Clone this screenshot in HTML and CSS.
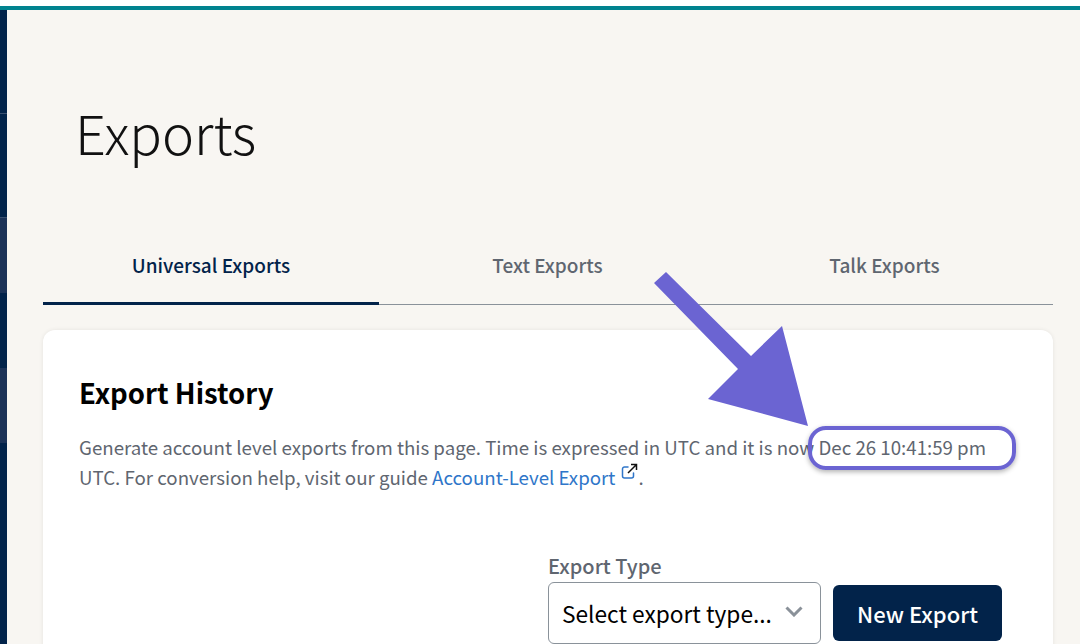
FILE: index.html
```html
<!DOCTYPE html>
<html lang="en">
<head>
<meta charset="utf-8">
<title>Exports</title>
<link rel="stylesheet" href="styles.css">
</head>
<body>
<div class="topbar"></div>
<div class="shell">
  <nav class="rail">
    <div class="seg seg-a"></div>
    <div class="seg seg-b"></div>
    <div class="seg seg-c"></div>
    <div class="seg seg-d"></div>
    <div class="seg seg-e"></div>
    <div class="seg seg-f"></div>
  </nav>
  <main class="main">
    <h1 class="title">Exports</h1>
    <div class="tabs">
      <div class="tab active">Universal Exports</div>
      <div class="tab">Text Exports</div>
      <div class="tab">Talk Exports</div>
    </div>
    <section class="card">
      <h2 class="card-title">Export History</h2>
      <p class="desc">Generate account level exports from this page. Time is expressed in UTC and it is now Dec 26 10:41:59 pm UTC. For conversion help, visit our guide <a class="link">Account-Level Export</a><svg class="ext" width="18" height="18" viewBox="0 0 18 18" fill="none"><path d="M8 4H4.500A2 2 0 0 0 2.500 6v7a2 2 0 0 0 2 2h7a2 2 0 0 0 2-2V10" stroke="#2f76c9" stroke-width="1.500" stroke-linecap="round"/><path d="M8 10 16 2M11 1.500h5.500V7" stroke="#111" stroke-width="1.500"/></svg>.</p>
      <div class="form">
        <div class="field">
          <label class="label">Export Type</label>
          <div class="select">
            <span>Select export type...</span>
            <svg class="chev" width="18" height="11" viewBox="0 0 18 11" fill="none"><path d="M1.500 1.500 9 9l7.500-7.500" stroke="#8a9199" stroke-width="3"/></svg>
          </div>
        </div>
        <button class="btn">New Export</button>
      </div>
    </section>
  </main>
</div>
<svg class="arrow" width="160" height="160" viewBox="0 0 160 160"><polygon points="4,13 16,2 101,86 132,56 158,156 58,129 88,99" fill="#6b64d2"/></svg>
<div class="mark"></div>
</body>
</html>
```
FILE: styles.css
```css
* { box-sizing: border-box; }
html, body { margin: 0; height: 644px; overflow: hidden; }
body { background: #fff; font-family: "Noto Sans CJK JP", "Noto Sans", sans-serif; position: relative; }
.topbar { height: 10px; border-top: 6px solid #fff; background: #00838f; }
.shell { display: flex; height: 634px; overflow: hidden; }
.rail { width: 7px; flex: none; display: flex; flex-direction: column; background: #02234a; }
.seg { flex: none; }
.seg-a { height: 104px; border-bottom: 1px solid #3a5070; }
.seg-b { height: 104px; border-bottom: 1px solid #3a5070; }
.seg-c { height: 75px; background: #1c3358; }
.seg-d { height: 75px; }
.seg-e { height: 75px; background: #1c3358; }
.seg-f { flex: 1; }
.main { flex: 1; background: #f8f6f2; padding: 0 27px 0 36px; min-width: 0; }
.title { margin: 0; padding: 85px 0 0 32px; height: 225px; font-size: 54px; line-height: 74px; font-weight: 200; color: #111; }
.tabs { display: flex; height: 70px; border-bottom: 1px solid #8a929a; }
.tab { flex: 1; text-align: center; font-size: 19px; line-height: 30px; padding-top: 15px; font-weight: 500; color: #5f6670; }
.tab.active { color: #02234a; border-bottom: 3px solid #02234a; margin-bottom: -1px; flex: 336px 0 0; }
.card { margin-top: 25px; background: #fff; border-radius: 12px 12px 0 0; height: 400px; padding: 42px 36px 0; box-shadow: 0 0 4px rgba(0,0,0,.08); }
.card-title { margin: 0; font-size: 27.500px; line-height: 40px; font-weight: 700; color: #000; }
.desc { margin: 20px 0 0; font-size: 18.700px; line-height: 30px; color: #5f6670; width: 930px; }
.link { color: #2f76c9; }
.ext { margin-left: 5px; vertical-align: 4px; }
.form { display: flex; align-items: flex-end; gap: 12px; margin: 58px 0 0 469px; }
.field { display: flex; flex-direction: column; }
.label { font-size: 20px; line-height: 32px; font-weight: 500; color: #5f6670; }
.select { width: 273px; height: 62px; border: 1px solid #8a929a; border-radius: 6px; display: flex; align-items: center; justify-content: space-between; padding: 0 17px 0 13px; font-size: 22.700px; color: #000; background: #fff; }
.chev { margin-top: -3px; }
.btn { width: 169px; height: 56px; margin-bottom: 3px; border: 0; border-radius: 6px; background: #02234a; color: #fff; font: 500 22px "Noto Sans CJK JP", "Noto Sans", sans-serif; }
.arrow { position: absolute; left: 650px; top: 270px; }
.mark { position: absolute; left: 808px; top: 426px; width: 208px; height: 44px; border: 4px solid #6b64d2; border-radius: 18px; box-shadow: 0 2px 5px rgba(0,0,0,.3); }
```
